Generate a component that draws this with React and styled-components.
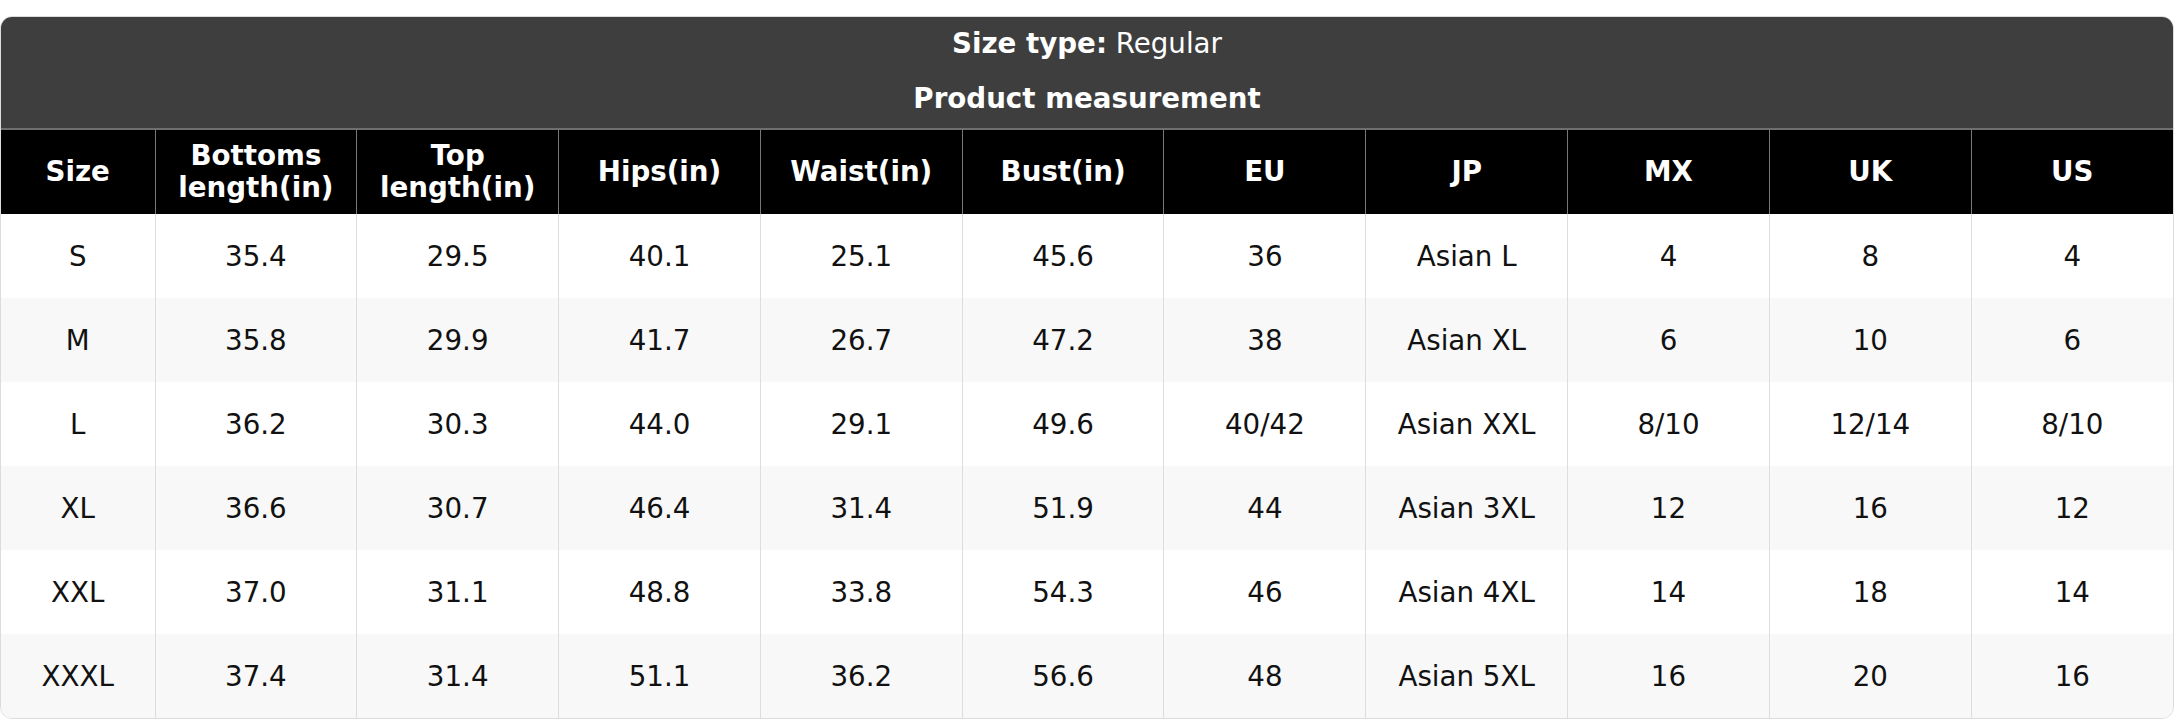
import React from "react";
import styled, { createGlobalStyle } from "styled-components";

const GlobalStyle = createGlobalStyle`
	html, body {
		margin: 0;
		padding: 0;
		background: #ffffff;
		font-family: "DejaVu Sans", Verdana, sans-serif;
	}
`;

const Page = styled.div`
	padding-top: 16px;
`;

const Card = styled.div`
	border: 1px solid #dcdcdc;
	border-radius: 12px;
	overflow: hidden;
	background: #ffffff;
`;

const Banner = styled.div`
	background: #3e3e3e;
	color: #ffffff;
	text-align: center;
	padding: 11px 0 13px;
	font-size: 27.7px;
`;

const BannerLine = styled.div`
	height: 32px;
	line-height: 32px;
	font-weight: ${(p) => (p.bold ? 700 : 400)};
	margin-top: ${(p) => (p.gap ? "23px" : "0")};
`;

const Table = styled.table`
	width: 100%;
	border-collapse: collapse;
	table-layout: fixed;
	font-size: 27.7px;
`;

const HeadRow = styled.tr`
	background: #000000;
	border-top: 2px solid #6f6f6f;
`;

const Th = styled.th`
	color: #ffffff;
	font-weight: 700;
	height: 84px;
	padding: 0 8px;
	line-height: 32px;
	text-align: center;
	vertical-align: middle;
	border-left: 1px solid #777777;
	&:first-child {
		border-left: none;
	}
`;

const Row = styled.tr`
	background: ${(p) => (p.striped ? "#f8f8f8" : "#ffffff")};
`;

const Td = styled.td`
	color: #111111;
	height: 84px;
	padding: 0 8px;
	text-align: center;
	vertical-align: middle;
	border-left: 1px solid #dddddd;
	&:first-child {
		border-left: none;
	}
`;

const headers = [
	"Size",
	<>Bottoms<br />length(in)</>,
	<>Top<br />length(in)</>,
	"Hips(in)",
	"Waist(in)",
	"Bust(in)",
	"EU",
	"JP",
	"MX",
	"UK",
	"US",
];

const rows = [
	["S", "35.4", "29.5", "40.1", "25.1", "45.6", "36", "Asian L", "4", "8", "4"],
	["M", "35.8", "29.9", "41.7", "26.7", "47.2", "38", "Asian XL", "6", "10", "6"],
	["L", "36.2", "30.3", "44.0", "29.1", "49.6", "40/42", "Asian XXL", "8/10", "12/14", "8/10"],
	["XL", "36.6", "30.7", "46.4", "31.4", "51.9", "44", "Asian 3XL", "12", "16", "12"],
	["XXL", "37.0", "31.1", "48.8", "33.8", "54.3", "46", "Asian 4XL", "14", "18", "14"],
	["XXXL", "37.4", "31.4", "51.1", "36.2", "56.6", "48", "Asian 5XL", "16", "20", "16"],
];

const App = () => {
	return (
		<Page>
			<GlobalStyle />
			<Card>
				<Banner>
					<BannerLine>
						<b>Size type:</b> Regular
					</BannerLine>
					<BannerLine bold gap>
						Product measurement
					</BannerLine>
				</Banner>
				<Table>
					<colgroup>
						<col style={{ width: "154px" }} />
						{headers.slice(1).map((_, i) => (
							<col key={i} />
						))}
					</colgroup>
					<thead>
						<HeadRow>
							{headers.map((h, i) => (
								<Th key={i}>{h}</Th>
							))}
						</HeadRow>
					</thead>
					<tbody>
						{rows.map((r, i) => (
							<Row key={r[0]} striped={i % 2 === 1}>
								{r.map((c, j) => (
									<Td key={j}>{c}</Td>
								))}
							</Row>
						))}
					</tbody>
				</Table>
			</Card>
		</Page>
	);
};

export default App;
